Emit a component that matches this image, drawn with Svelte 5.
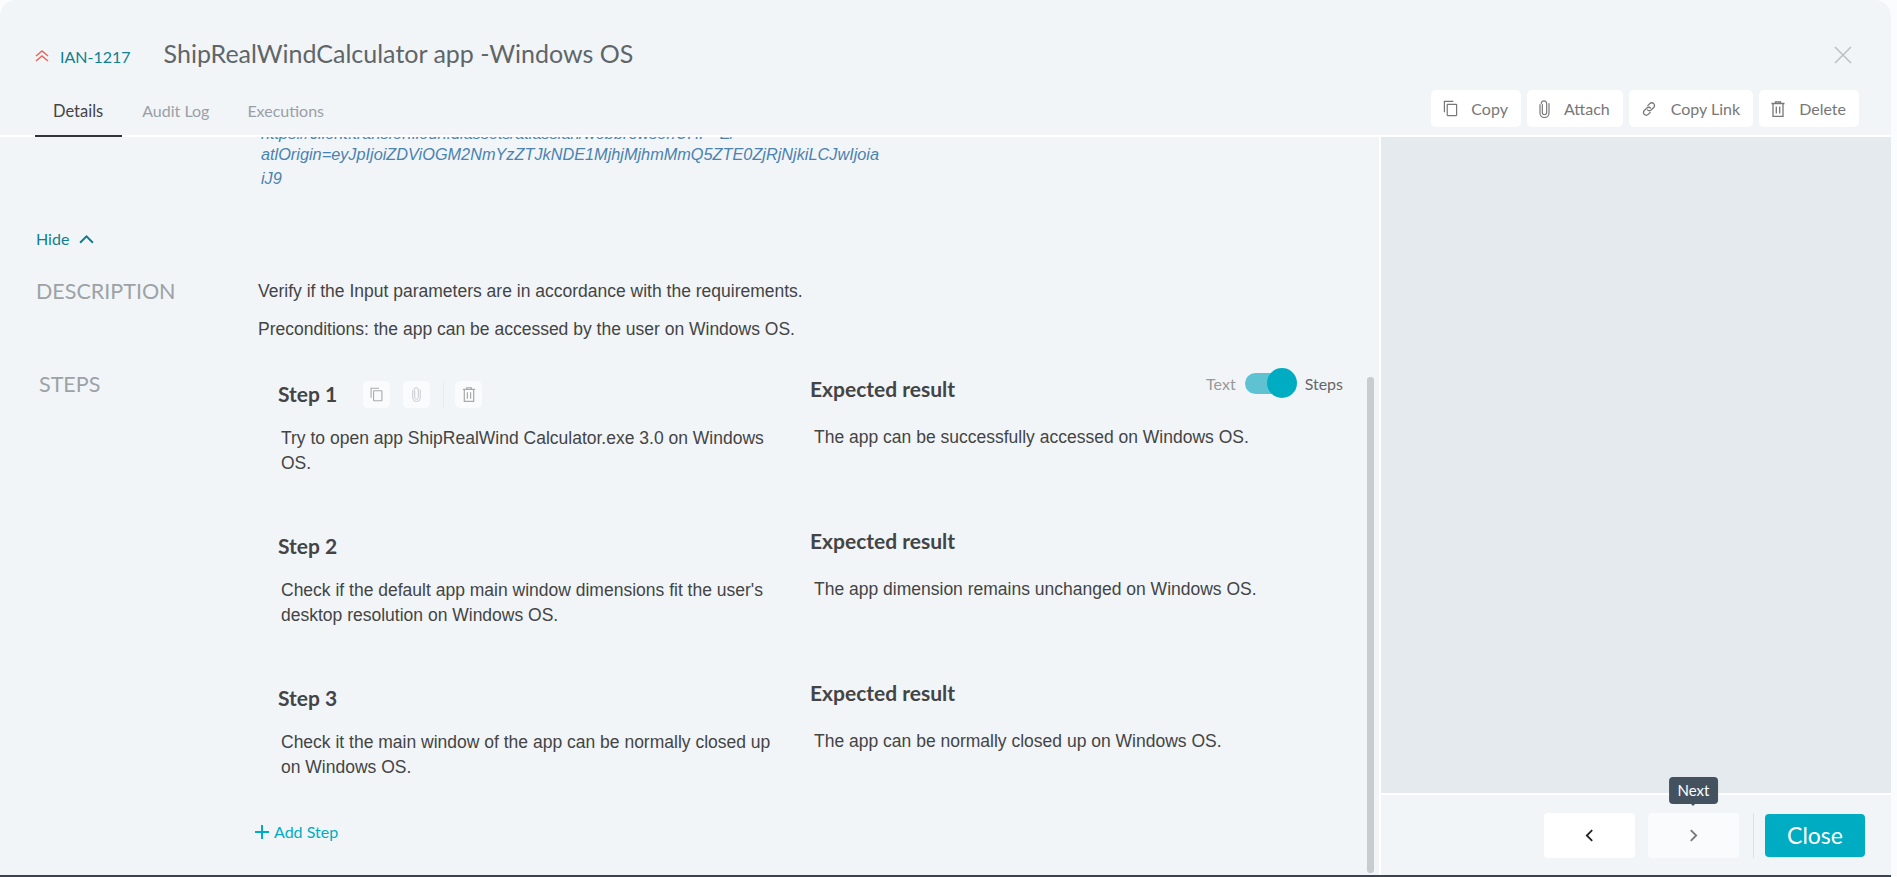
<script>
  const steps = [
    { no: 1, action: ["Try to open app ShipRealWind Calculator.exe 3.0 on Windows", "OS."], result: "The app can be successfully accessed on Windows OS." },
    { no: 2, action: ["Check if the default app main window dimensions fit the user's", "desktop resolution on Windows OS."], result: "The app dimension remains unchanged on Windows OS." },
    { no: 3, action: ["Check it the main window of the app can be normally closed up", "on Windows OS."], result: "The app can be normally closed up on Windows OS." }
  ];
  const tabs = ["Details", "Audit Log", "Executions"];
  let stepsMode = $state(true);
</script>

{#snippet copyIcon()}
  <svg viewBox="0 0 16 18" width="15" height="17" fill="none" stroke="currentColor" stroke-width="1.3"><path d="M1.5 13V1.5H11"/><rect x="4.5" y="4.5" width="10" height="12" rx="0.5"/></svg>
{/snippet}
{#snippet clipIcon()}
  <svg viewBox="0 0 12 20" width="11" height="18" fill="none" stroke="currentColor" stroke-width="1.3" stroke-linecap="round"><path d="M3.6 5v9a2.4 2.4 0 0 0 4.8 0V4a3 3 0 0 0-6 0"/><path d="M1 5v9.5a5 5 0 0 0 10 0V4"/></svg>
{/snippet}
{#snippet trashIcon()}
  <svg viewBox="0 0 14 16" width="14" height="16" fill="none" stroke="currentColor" stroke-width="1.3"><path d="M0.5 2.5h13M4.5 2.5V0.8h5v1.7M2 2.5v12.8h10V2.5M5.3 5.5v7M8.7 5.5v7"/></svg>
{/snippet}
{#snippet linkIcon()}
  <svg viewBox="0 0 16 16" width="16" height="16" fill="none" stroke="currentColor" stroke-width="1.3" stroke-linecap="round"><path d="M6.8 4.6l2-2a2.7 2.7 0 0 1 3.9 0 2.7 2.7 0 0 1 0 3.9l-2.4 2.4a2.7 2.7 0 0 1-3.9 0"/><path d="M9.2 11.4l-2 2a2.7 2.7 0 0 1-3.9 0 2.7 2.7 0 0 1 0-3.9l2.4-2.4a2.7 2.7 0 0 1 3.9 0"/></svg>
{/snippet}

<div class="modal">
  <header class="head">
    <div class="title-row">
      <svg class="prio" viewBox="0 0 14 12" width="14" height="12" fill="none" stroke="#e5675c" stroke-width="1.5"><path d="M1 6l6-5 6 5M1 11l6-5 6 5"/></svg>
      <a class="key" href="#top">IAN-1217</a>
      <h1>ShipRealWindCalculator app -Windows OS</h1>
      <svg class="x" viewBox="0 0 18 18" width="18" height="18" stroke="#bcc1c5" stroke-width="1.6"><path d="M1 1l16 16M17 1L1 17"/></svg>
    </div>
    <div class="tab-row">
      <nav class="tabs">
        {#each tabs as tab, i}
          <span class="tab" class:active={i === 0}>{tab}</span>
        {/each}
      </nav>
      <div class="actions">
        <button>{@render copyIcon()}<span>Copy</span></button>
        <button>{@render clipIcon()}<span>Attach</span></button>
        <button>{@render linkIcon()}<span>Copy Link</span></button>
        <button>{@render trashIcon()}<span>Delete</span></button>
      </div>
    </div>
  </header>

  <div class="body">
    <main class="content">
      <div class="link-box">
        <p class="cut">https://client.transferfileurl.dlassets/atlassian/webbrowser.UHP=E/</p>
        <p>atlOrigin=eyJpIjoiZDViOGM2NmYzZTJkNDE1MjhjMjhmMmQ5ZTE0ZjRjNjkiLCJwIjoia</p>
        <p>iJ9</p>
      </div>
      <button class="hide">Hide
        <svg viewBox="0 0 14 9" width="15" height="10" fill="none" stroke="#0c7c8c" stroke-width="1.8"><path d="M1 8l6-6 6 6"/></svg>
      </button>

      <section class="desc">
        <h2>DESCRIPTION</h2>
        <div class="desc-text">
          <p>Verify if the Input parameters are in accordance with the requirements.</p>
          <p>Preconditions: the app can be accessed by the user on Windows OS.</p>
        </div>
      </section>

      <section class="steps">
        <h2>STEPS</h2>
        <div class="step-list">
          <div class="toggle-wrap">
            <span class="off">Text</span>
            <button class="toggle" aria-label="Toggle steps" onclick={() => (stepsMode = !stepsMode)}><i></i></button>
            <span>Steps</span>
          </div>
          {#each steps as step}
            <div class="step">
              <div class="col">
                <div class="step-head">
                  <h3>Step {step.no}</h3>
                  {#if step.no === 1}
                    <div class="mini">
                      <span class="mini-btn">{@render copyIcon()}</span>
                      <span class="mini-btn faint">{@render clipIcon()}</span>
                      <span class="mini-sep"></span>
                      <span class="mini-btn">{@render trashIcon()}</span>
                    </div>
                  {/if}
                </div>
                <p>{step.action[0]}<br />{step.action[1]}</p>
              </div>
              <div class="col">
                <h3 class="res-head">Expected result</h3>
                <p>{step.result}</p>
              </div>
            </div>
          {/each}
          <button class="add">
            <svg viewBox="0 0 14 14" width="14" height="14" stroke="#00acc1" stroke-width="2"><path d="M7 0v14M0 7h14"/></svg>
            Add Step
          </button>
        </div>
      </section>
      <div class="scrollbar"></div>
    </main>

    <aside class="side">
      <div class="side-fill"></div>
      <div class="side-foot">
        <button class="nav">
          <svg viewBox="0 0 10 14" width="9" height="13" fill="none" stroke="#222" stroke-width="2"><path d="M8 1L2 7l6 6"/></svg>
        </button>
        <button class="nav next">
          <svg viewBox="0 0 10 14" width="9" height="13" fill="none" stroke="#777" stroke-width="2"><path d="M2 1l6 6-6 6"/></svg>
          <span class="tip">Next</span>
        </button>
        <span class="sep"></span>
        <button class="close">Close</button>
      </div>
    </aside>
  </div>
</div>

<style>
  :global(body) {
    margin: 0;
    background: #fbfcfd;
  }
  p, h1, h2, h3 { margin: 0; font-weight: 400; }
  button { font-family: inherit; border: 0; cursor: pointer; }

  .modal {
    width: 1891px;
    height: 875px;
    background: #f1f5f8;
    border-radius: 16px 16px 0 0;
    border-bottom: 2px solid #3a4450;
    overflow: hidden;
    display: flex;
    flex-direction: column;
    font-family: Lato, sans-serif;
    color: #444;
  }

  .head {
    height: 137px;
    box-sizing: border-box;
    border-bottom: 2px solid #fff;
    display: flex;
    flex-direction: column;
  }
  .title-row {
    display: flex;
    align-items: center;
    padding: 38px 0 0 35px;
    height: 34px;
  }
  .prio { margin: 2px 11px 0 0; }
  .key { color: #10808f; font-size: 16px; text-decoration: none; margin: 2px 33px 0 0; }
  h1 { font-size: 25px; color: #606568; flex: 1; margin-top: -5px; }
  .x { margin-right: 39px; }

  .tab-row {
    display: flex;
    justify-content: space-between;
    padding-top: 18px;
    flex: 1;
  }
  .tabs { display: flex; padding-left: 35px; align-items: stretch; }
  .tab {
    font-size: 16px;
    color: #9a9fa6;
    margin-right: 20px;
    padding: 11px 18px 0 0;
  }
  .tab.active {
    color: #444;
    font-size: 16.5px;
    padding: 11px 19px 0 18px;
    margin-right: 20px;
    border-bottom: 2px solid #333;
    margin-bottom: -2px;
  }
  .actions { display: flex; gap: 6px; padding-right: 32px; height: 37px; }
  .actions button {
    display: flex;
    align-items: center;
    gap: 13px;
    background: #fff;
    color: #777;
    font-size: 16px;
    border-radius: 5px;
    padding: 0 13px 0 12px;
  }
  .actions button + button { gap: 14px; }

  .body { flex: 1; display: flex; min-height: 0; }
  .content {
    width: 1379px;
    position: relative;
    overflow: hidden;
    padding-left: 36px;
    box-sizing: border-box;
    font-family: "Liberation Sans", sans-serif;
  }
  .link-box {
    margin: -6px 0 0 225px;
    color: #4a82b0;
    font-style: italic;
    font-size: 16.3px;
    line-height: 23.5px;
    height: 81px;
  }
  .cut { height: 12px; overflow: hidden; line-height: 4px; }
  .hide {
    display: flex;
    align-items: center;
    gap: 10px;
    background: none;
    padding: 0;
    margin-top: 17px;
    color: #10808f;
    font: 16px Lato, sans-serif;
  }

  .desc, .steps { display: flex; }
  .desc { margin-top: 30px; }
  h2 { font-family: Lato, sans-serif; font-size: 21.5px; color: #9da2a6; width: 222px; }
  .desc-text { font-size: 17.5px; color: #444; margin-top: 2px; }
  .desc-text p { line-height: 22px; margin-bottom: 16px; }

  .steps { margin-top: 15px; }
  .steps h2 { padding-left: 3px; width: 219px; }
  .step-list { position: relative; flex: 1; padding-top: 5px; }
  .toggle-wrap {
    position: absolute;
    top: 2px;
    right: 36px;
    display: flex;
    align-items: center;
    gap: 9px;
    font: 16px Lato, sans-serif;
    color: #666;
  }
  .off { color: #999; }
  .toggle {
    position: relative;
    width: 51px;
    height: 21px;
    border-radius: 10.5px;
    background: #5fc2d3;
    padding: 0;
  }
  .toggle i {
    position: absolute;
    right: -1px;
    top: -5px;
    width: 30px;
    height: 30px;
    border-radius: 50%;
    background: #00acc1;
  }

  .step { display: flex; height: 152px; }
  .col { box-sizing: border-box; }
  .col:first-child { width: 552px; padding-left: 20px; }
  .col p { font-size: 17.5px; line-height: 25px; color: #444; padding-left: 4px; margin-top: 23px; }
  .col:first-child p { margin-top: 18px; padding-left: 3px; }
  h3 { font-family: Lato, sans-serif; font-weight: 700; font-size: 21px; color: #444; line-height: 26px; }
  .step-head { display: flex; align-items: center; gap: 26px; margin-top: 4px; height: 28px; }
  .mini { display: flex; gap: 13px; color: #aaa; }
  .mini svg { height: 15px; }
  .mini-btn {
    width: 27px;
    height: 27px;
    background: #fafbfc;
    border-radius: 5px;
    display: flex;
    align-items: center;
    justify-content: center;
  }
  .mini-btn.faint { color: #c6cacd; }
  .mini-sep { width: 1px; background: #e9edf0; margin-right: -2px; }

  .add {
    display: flex;
    align-items: center;
    gap: 5px;
    background: none;
    padding: 0;
    margin: -10px 0 0 -3px;
    color: #00acc1;
    font: 16px Lato, sans-serif;
  }

  .scrollbar {
    position: absolute;
    right: 5px;
    top: 240px;
    bottom: 2px;
    width: 7px;
    border-radius: 3px;
    background: #c8ccd0;
  }

  .side { flex: 1; display: flex; flex-direction: column; border-left: 2px solid #fff; }
  .side-fill { flex: 1; background: #e5eaee; }
  .side-foot {
    height: 82px;
    box-sizing: border-box;
    border-top: 2px solid #fff;
    display: flex;
    align-items: center;
    justify-content: flex-end;
    padding: 0 26px 0 0;
  }
  .nav {
    position: relative;
    width: 91px;
    height: 45px;
    background: #fff;
    border-radius: 4px;
    margin-right: 13px;
    display: flex;
    align-items: center;
    justify-content: center;
  }
  .nav.next { background: #f9fbfc; margin-right: 14px; }
  .tip {
    position: absolute;
    top: -36px;
    left: 50%;
    transform: translateX(-50%);
    background: #44525f;
    color: #fff;
    font-size: 15px;
    padding: 0 9px;
    line-height: 27px;
    border-radius: 4px;
  }
  .tip::after {
    content: "";
    position: absolute;
    left: 50%;
    bottom: -2px;
    margin-left: -2px;
    border: 2px solid transparent;
    border-bottom: 0;
    border-top-color: #44525f;
  }
  .sep { width: 1px; height: 45px; background: #dde1e4; margin-right: 11px; }
  .close {
    width: 100px;
    height: 43px;
    background: #00acc1;
    color: #fff;
    font-size: 23px;
    border-radius: 4px;
  }
</style>
